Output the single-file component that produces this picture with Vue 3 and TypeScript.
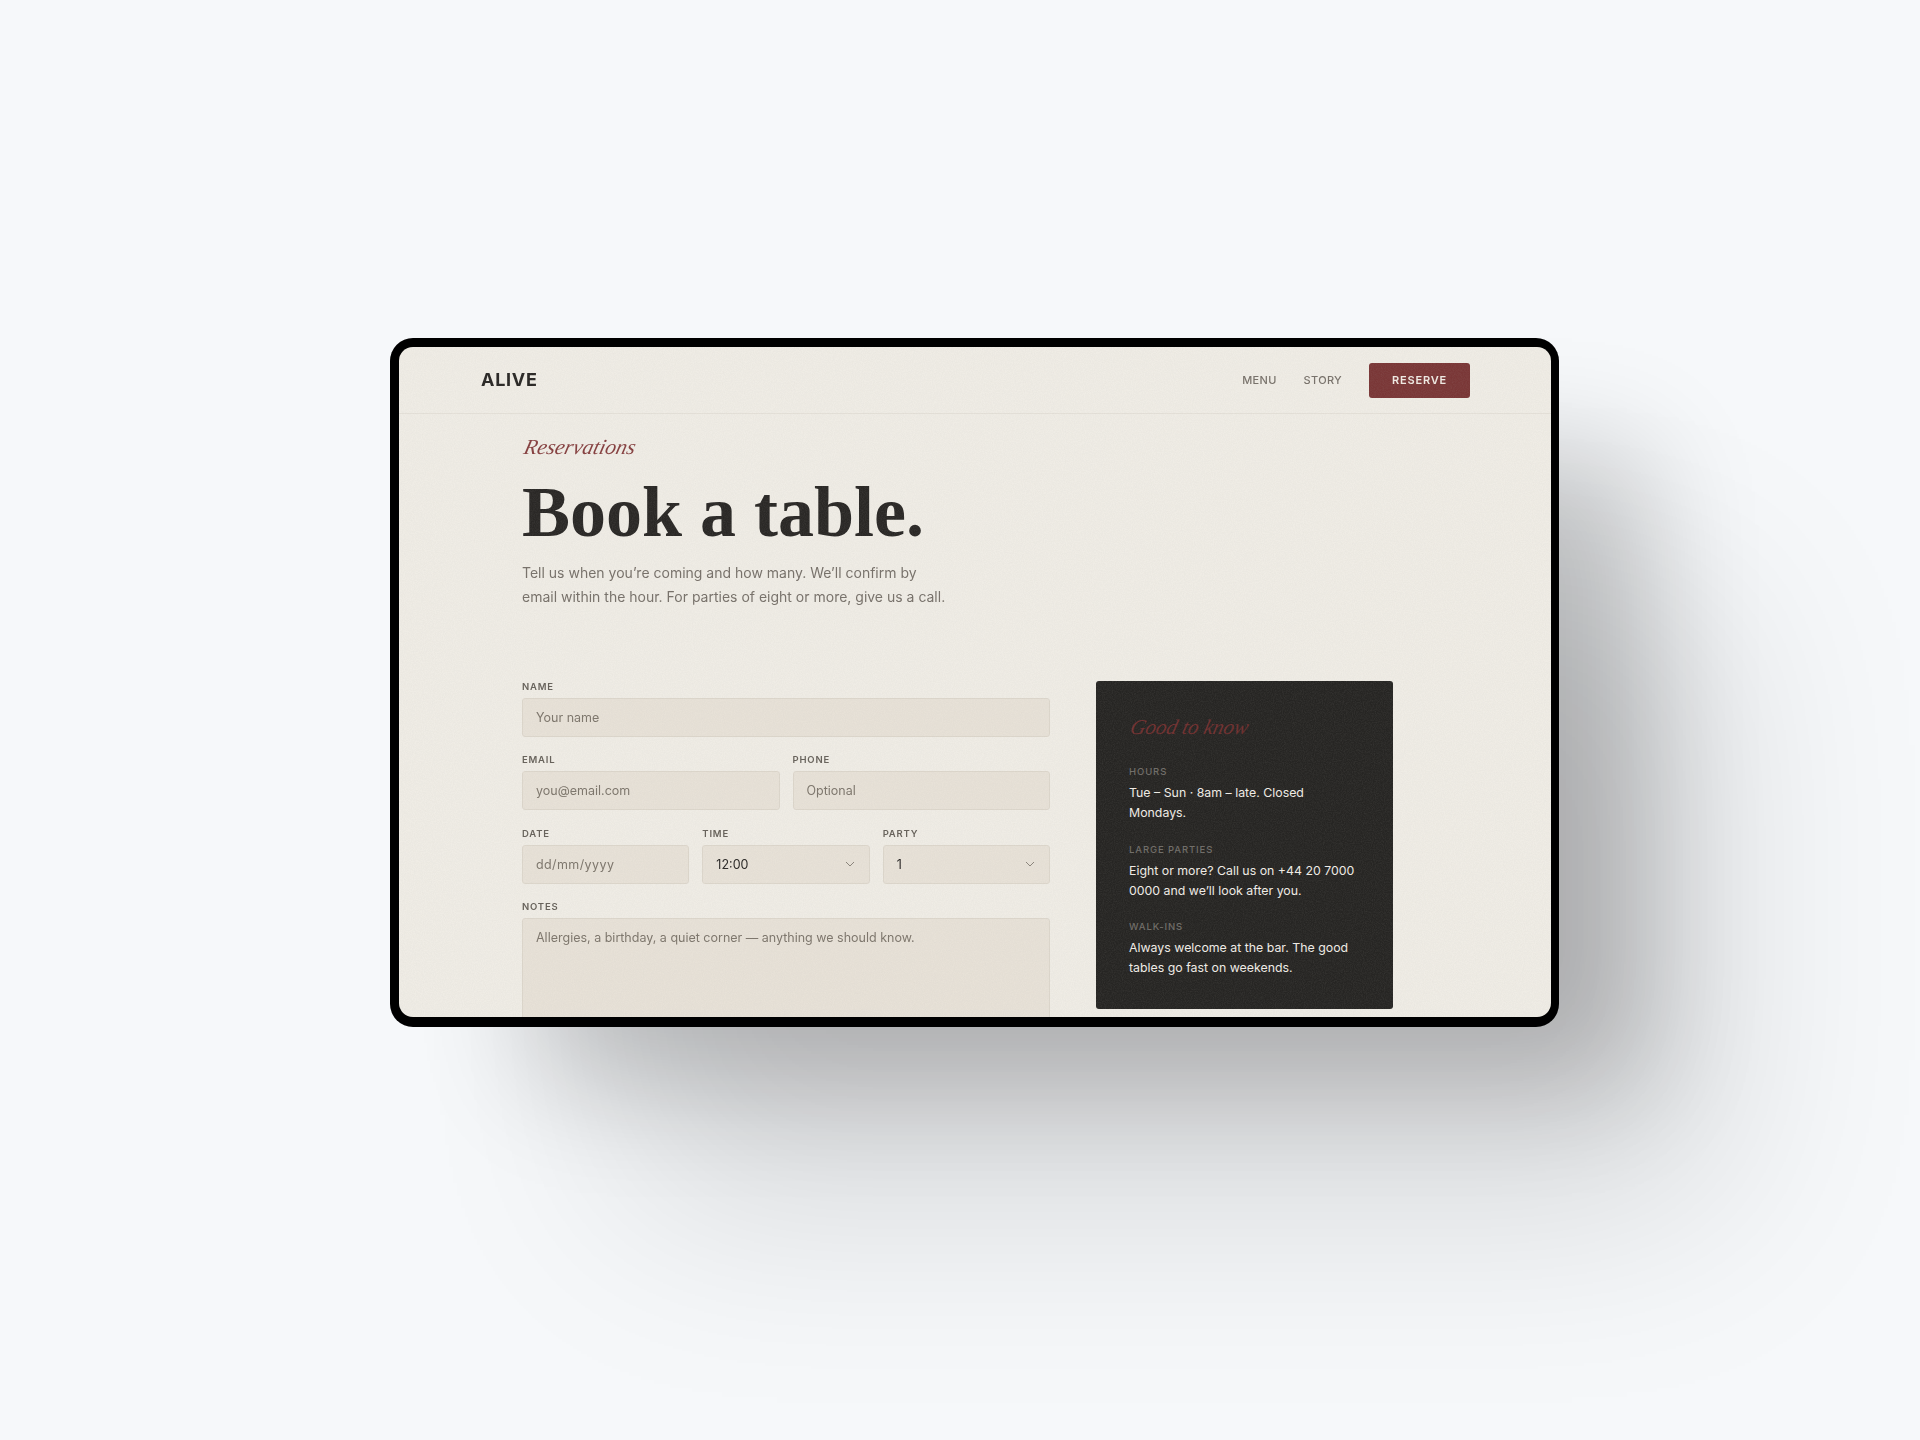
<script setup lang="ts">
interface Note { label: string; text: string }
const times: string[] = ['12:00', '12:30', '13:00', '13:30']
const parties: string[] = ['1', '2', '3', '4', '5', '6', '7']
const notes: Note[] = [
  { label: 'Hours', text: 'Tue – Sun · 8am – late. Closed Mondays.' },
  { label: 'Large parties', text: 'Eight or more? Call us on +44 20 7000 0000 and we’ll look after you.' },
  { label: 'Walk-ins', text: 'Always welcome at the bar. The good tables go fast on weekends.' }
]
</script>

<template>
  <div class="stage">
    <div class="device">
      <div class="screen">
        <div class="soft">
          <header class="bar">
            <div class="logo">ALIVE</div>
            <nav class="nav">
              <a class="link">MENU</a>
              <a class="link">STORY</a>
              <button class="reserve" type="button">RESERVE</button>
            </nav>
          </header>
          <main class="main">
            <p class="eyebrow"><span>Reservations</span></p>
            <h1 class="title">Book a table.</h1>
            <p class="lead">Tell us when you’re coming and how many. We’ll confirm by<br>email within the hour. For parties of eight or more, give us a call.</p>
            <div class="columns">
              <form class="form">
                <label class="field"><span class="lab">NAME</span><input class="ctl" type="text" placeholder="Your name"></label>
                <div class="row two">
                  <label class="field"><span class="lab">EMAIL</span><input class="ctl" type="text" placeholder="you@email.com"></label>
                  <label class="field"><span class="lab">PHONE</span><input class="ctl" type="text" placeholder="Optional"></label>
                </div>
                <div class="row three">
                  <label class="field"><span class="lab">DATE</span><input class="ctl date" type="text" placeholder="dd/mm/yyyy"></label>
                  <label class="field">
                    <span class="lab">TIME</span>
                    <span class="sel">
                      <select class="ctl pick"><option v-for="t in times" :key="t">{{ t }}</option></select>
                      <svg class="chev" viewBox="0 0 10 6" width="10" height="6"><path d="M1 1l4 4 4-4" /></svg>
                    </span>
                  </label>
                  <label class="field">
                    <span class="lab">PARTY</span>
                    <span class="sel">
                      <select class="ctl pick"><option v-for="p in parties" :key="p">{{ p }}</option></select>
                      <svg class="chev" viewBox="0 0 10 6" width="10" height="6"><path d="M1 1l4 4 4-4" /></svg>
                    </span>
                  </label>
                </div>
                <label class="field"><span class="lab">NOTES</span><textarea class="ctl area" placeholder="Allergies, a birthday, a quiet corner — anything we should know."></textarea></label>
              </form>
              <aside class="panel">
                <h2 class="panel-title"><span>Good to know</span></h2>
                <div v-for="n in notes" :key="n.label" class="note">
                  <div class="note-label">{{ n.label }}</div>
                  <p class="note-text">{{ n.text }}</p>
                </div>
              </aside>
            </div>
          </main>
          <svg class="grain" aria-hidden="true">
            <filter id="grain-noise">
              <feTurbulence type="fractalNoise" baseFrequency="0.9" numOctaves="3" seed="4" />
              <feColorMatrix type="matrix" values="0 0 0 0 0.5  0 0 0 0 0.48  0 0 0 0 0.45  0 0 0 1.4 -0.45" />
            </filter>
            <rect width="100%" height="100%" filter="url(#grain-noise)" />
          </svg>
        </div>
      </div>
    </div>
  </div>
</template>

<style>
html, body { margin: 0; background: #f6f8fa; }
</style>

<style scoped>
.stage {
  width: 1920px;
  height: 1440px;
  box-sizing: border-box;
  padding: 338px 0 0 390px;
  overflow: hidden;
  background: #f6f8fa;
  font-family: Inter, "Liberation Sans", sans-serif;
}
.device {
  width: 1169px;
  height: 689px;
  box-sizing: border-box;
  padding: 9px 8px 10px 9px;
  background: #000;
  border-radius: 23px;
  box-shadow:
    115px 85px 110px -30px rgba(0, 0, 0, 0.2),
    200px 220px 200px -40px rgba(0, 0, 0, 0.13);
}
.screen {
  height: 670px;
  overflow: hidden;
  border-radius: 14px;
  background: #efece5;
}
.soft { position: relative; height: 670px; filter: blur(0.4px); }
.grain { position: absolute; inset: 0; width: 100%; height: 100%; pointer-events: none; opacity: 0.12; }
.bar {
  height: 66px;
  box-sizing: content-box;
  border-bottom: 1px solid #e4e0d8;
  display: flex;
  align-items: center;
  justify-content: space-between;
  padding: 0 81px 0 82px;
}
.logo { margin-top: -2px; font-size: 18px; font-weight: 700; letter-spacing: 0.7px; color: #2a2826; }
.nav { display: flex; align-items: center; }
.link { font-size: 11px; font-weight: 500; letter-spacing: 0.3px; color: #77716a; margin-right: 27px; }
.reserve {
  width: 101px;
  height: 35px;
  padding: 0;
  border: 0;
  border-radius: 3px;
  background: #7a3737;
  color: #f0ebe4;
  font: 600 11px Inter, sans-serif;
  letter-spacing: 0.8px;
}
.main { padding: 0 0 0 123px; }
.eyebrow {
  margin: 0;
  padding-top: 19px;
  height: 38px;
  font: italic 400 21.5px/28px "Liberation Serif", serif;
  color: #853f3f;
}
.eyebrow span { display: inline-block; margin-left: -1px; transform: skewX(-14deg); transform-origin: 0 100%; }
.title {
  margin: 0;
  font: 700 72px/82px "Liberation Serif", serif;
  color: #2a2826;
}
.lead { margin: 8px 0 0; font-size: 14px; line-height: 24px; color: #77716a; }
.columns {
  margin-top: 72px;
  width: 871px;
  display: grid;
  grid-template-columns: 528px 297px;
  column-gap: 46px;
  align-items: start;
}
.form { display: flex; flex-direction: column; gap: 17.4px; }
.row { display: grid; column-gap: 13px; }
.two { grid-template-columns: 1fr 1fr; }
.three { grid-template-columns: 1fr 1fr 1fr; }
.field { display: flex; flex-direction: column; gap: 6px; min-width: 0; }
.lab { font-size: 9.5px; line-height: 11px; font-weight: 600; letter-spacing: 0.8px; color: #66615a; }
.ctl {
  display: block;
  width: 100%;
  height: 39px;
  box-sizing: border-box;
  margin: 0;
  padding: 0 13px;
  border: 1px solid #dcd6cb;
  border-radius: 3px;
  outline: 0;
  background: #e7e1d7;
  color: #2a2826;
  font: 400 12.5px Inter, sans-serif;
}
.ctl::placeholder { color: #7d766c; opacity: 1; }
.date { letter-spacing: 0.4px; }
.sel { position: relative; display: block; }
.pick { appearance: none; }
.chev { position: absolute; right: 15px; top: 16px; pointer-events: none; fill: none; stroke: #8b857b; stroke-width: 1; }
.area { height: 140px; padding-top: 11px; resize: none; }
.panel {
  height: 328px;
  box-sizing: border-box;
  padding: 31px 33px 0;
  border-radius: 3px;
  background: #262523;
}
.panel-title {
  margin: 0 0 24.4px;
  font: italic 400 21px/30px "Liberation Serif", serif;
  color: #6e2f2f;
}
.panel-title span { display: inline-block; margin-left: -2px; transform: skewX(-14deg); transform-origin: 0 100%; }
.note { margin-bottom: 20.5px; }
.note-label { font-size: 9.5px; line-height: 12px; font-weight: 500; letter-spacing: 0.9px; color: #6f6c67; text-transform: uppercase; margin-bottom: 5px; }
.note-text { margin: 0; font-size: 12.35px; line-height: 20px; color: #f0ece6; }
</style>
